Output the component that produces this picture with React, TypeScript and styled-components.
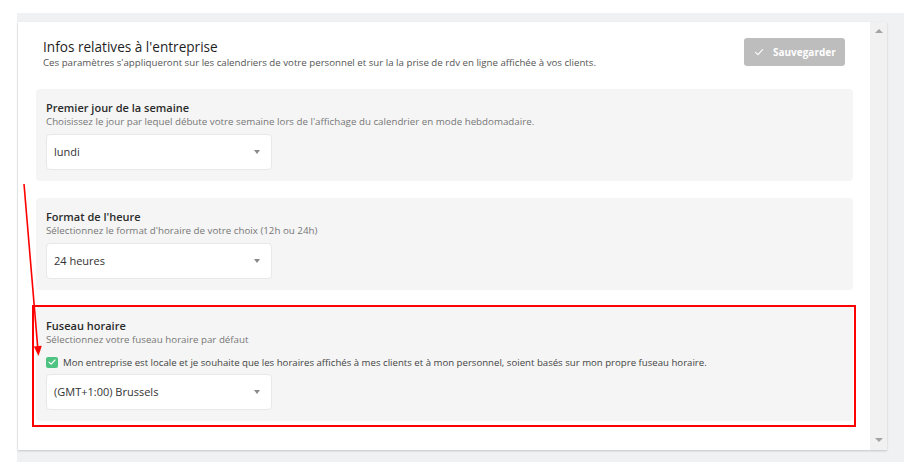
import styled, { createGlobalStyle } from "styled-components"

const GlobalStyle = createGlobalStyle`
  html, body {
    margin: 0;
    padding: 0;
    background: #ffffff;
    font-family: 'Open Sans', 'Liberation Sans', sans-serif;
  }
`

const Page = styled.div`
  padding: 13px 10px 0 17px;
`

const Panel = styled.div`
  width: 887px;
  height: 449px;
  box-sizing: border-box;
  background: #f0f1f3;
  padding: 9px 0 0 1px;
`

const Frame = styled.div`
  display: flex;
  width: 869px;
  height: 428px;
  box-shadow: 0 1px 2px rgba(0, 0, 0, 0.18);
`

const Card = styled.div`
  position: relative;
  flex: 1;
  background: #ffffff;
  padding: 16px 17px 0 18px;
  box-sizing: border-box;
`

const Header = styled.div`
  display: flex;
  justify-content: space-between;
  align-items: flex-start;
  padding: 0 8px 0 7px;
  margin-bottom: 19px;
`

const Title = styled.h1`
  margin: 0;
  font-size: 13.6px;
  line-height: 18px;
  font-weight: 500;
  color: #1f1f1f;
`

const Subtitle = styled.p`
  margin: 0;
  font-size: 9.7px;
  line-height: 14px;
  color: #555;
`

const SaveButton = styled.button`
  display: flex;
  align-items: center;
  gap: 8px;
  width: 101px;
  height: 28px;
  padding: 0 0 0 9px;
  border: none;
  border-radius: 3px;
  background: #bdbdbd;
  color: #fff;
  font-family: inherit;
  font-size: 10px;
  font-weight: 700;
`

const Sections = styled.div`
  display: flex;
  flex-direction: column;
  gap: 17px;
`

const Section = styled.section`
  position: relative;
  background: #f5f5f5;
  border-radius: 4px;
  padding: 11px 10px 11px 10px;
`

const SectionTitle = styled.h2`
  margin: 0;
  font-size: 11px;
  line-height: 15px;
  font-weight: 600;
  color: #2b2b2b;
`

const SectionDesc = styled.p`
  margin: 0;
  font-size: 9.75px;
  line-height: 14px;
  color: #777;
`

const Select = styled.div`
  display: flex;
  align-items: center;
  justify-content: space-between;
  width: 226px;
  height: 36px;
  box-sizing: border-box;
  margin-top: 5px;
  padding: 0 11px 2px 7px;
  background: #fff;
  border: 1px solid #e8e8e8;
  border-radius: 4px;
  font-size: 11px;
  color: #333;
`

const Caret = styled.span`
  width: 0;
  height: 0;
  margin-top: 2px;
  border-left: 3.5px solid transparent;
  border-right: 3.5px solid transparent;
  border-top: 4px solid #8a8a8a;
`

const CheckRow = styled.label`
  display: flex;
  align-items: center;
  gap: 5px;
  margin-top: 8px;
  height: 14px;
  font-size: 9.65px;
  color: #444;
`

const CheckBox = styled.span`
  display: flex;
  align-items: center;
  justify-content: center;
  width: 12px;
  height: 11px;
  border-radius: 2px;
  background: #4fc382;
`

const Highlight = styled.div`
  position: absolute;
  top: -2px;
  left: -4px;
  right: -3px;
  bottom: -6px;
  border: 2px solid #ff0000;
  pointer-events: none;
`

const Pointer = styled.svg`
  position: absolute;
  left: 2px;
  top: 158px;
  overflow: visible;
  pointer-events: none;
`

const Scrollbar = styled.div`
  display: flex;
  flex-direction: column;
  justify-content: space-between;
  align-items: center;
  width: 17px;
  background: #f1f1f1;
  padding: 7px 0 8px;
  box-sizing: border-box;
`

const ScrollArrow = styled.span<{ $down?: boolean }>`
  width: 0;
  height: 0;
  border-left: 4px solid transparent;
  border-right: 4px solid transparent;
  ${(p) => (p.$down ? "border-top: 4px solid #a3a3a3;" : "border-bottom: 4px solid #a3a3a3;")}
`

const Check = ({ size, color, weight = 1.4 }: { size: number; color: string; weight?: number }) => (
  <svg width={size} height={size} viewBox="0 0 12 12">
    <path d="M2.5 6.3 L5 8.6 L9.6 3.6" fill="none" stroke={color} strokeWidth={weight} strokeLinecap="round" strokeLinejoin="round" />
  </svg>
)

const SelectBox = ({ value }: { value: string }) => (
  <Select>
    <span>{value}</span>
    <Caret />
  </Select>
)

export default function App() {
  return (
    <>
      <GlobalStyle />
      <Page>
        <Panel>
          <Frame>
            <Card>
              <Header>
                <div>
                  <Title>Infos relatives à l'entreprise</Title>
                  <Subtitle>
                    Ces paramètres s'appliqueront sur les calendriers de votre personnel et sur la la prise de rdv en ligne affichée à vos clients.
                  </Subtitle>
                </div>
                <SaveButton>
                  <Check size={12} color="#ffffff" weight={1.1} />
                  Sauvegarder
                </SaveButton>
              </Header>
              <Sections>
                <Section>
                  <SectionTitle>Premier jour de la semaine</SectionTitle>
                  <SectionDesc>
                    Choisissez le jour par lequel débute votre semaine lors de l'affichage du calendrier en mode hebdomadaire.
                  </SectionDesc>
                  <SelectBox value="lundi" />
                </Section>
                <Section>
                  <SectionTitle>Format de l'heure</SectionTitle>
                  <SectionDesc>Sélectionnez le format d'horaire de votre choix (12h ou 24h)</SectionDesc>
                  <SelectBox value="24 heures" />
                </Section>
                <Section>
                  <SectionTitle>Fuseau horaire</SectionTitle>
                  <SectionDesc>Sélectionnez votre fuseau horaire par défaut</SectionDesc>
                  <CheckRow>
                    <CheckBox>
                      <Check size={10} color="#ffffff" />
                    </CheckBox>
                    Mon entreprise est locale et je souhaite que les horaires affichés à mes clients et à mon personnel, soient basés sur mon propre fuseau horaire.
                  </CheckRow>
                  <SelectBox value="(GMT+1:00) Brussels" />
                  <Highlight />
                </Section>
              </Sections>
              <Pointer width="24" height="180" viewBox="0 0 24 180">
                <line x1="4" y1="4" x2="17.7" y2="167" stroke="#ff0000" strokeWidth="1.6" />
                <polygon points="18.5,176 21.8,165.7 13.9,166.4" fill="#ff0000" />
              </Pointer>
            </Card>
            <Scrollbar>
              <ScrollArrow />
              <ScrollArrow $down />
            </Scrollbar>
          </Frame>
        </Panel>
      </Page>
    </>
  )
}
